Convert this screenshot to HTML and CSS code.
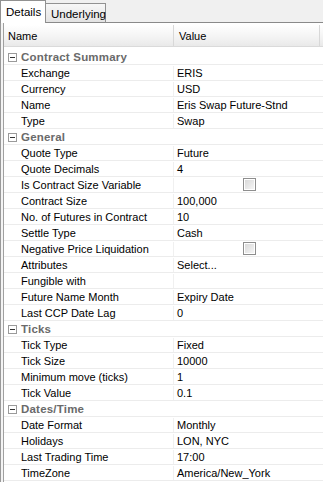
FILE: index.html
```html
<!DOCTYPE html>
<html lang="en">

<head>
    <meta charset="UTF-8" />
    <title>Contract Properties</title>
    <link rel="stylesheet" href="styles.css">
</head>

<body>
    <div class="tabs">
        <div class="tab active">Details</div>
        <div class="tab">Underlying</div>
        <div class="tab-fill"></div>
    </div>

    <div class="panel">
        <div class="grid">
            <div class="head">
                <div class="head-cell">Name</div>
                <div class="head-cell">Value</div>
            </div>
            <div class="head-gap"></div>
            <div id="rows"></div>
        </div>
    </div>

    <script>
        // property groups, [label, value]; value true/false = checkbox
        const groups = [
            ["Contract Summary", [
                ["Exchange", "ERIS"],
                ["Currency", "USD"],
                ["Name", "Eris Swap Future-Stnd"],
                ["Type", "Swap"]
            ]],
            ["General", [
                ["Quote Type", "Future"],
                ["Quote Decimals", "4"],
                ["Is Contract Size Variable", false],
                ["Contract Size", "100,000"],
                ["No. of Futures in Contract", "10"],
                ["Settle Type", "Cash"],
                ["Negative Price Liquidation", false],
                ["Attributes", "Select..."],
                ["Fungible with", ""],
                ["Future Name Month", "Expiry Date"],
                ["Last CCP Date Lag", "0"]
            ]],
            ["Ticks", [
                ["Tick Type", "Fixed"],
                ["Tick Size", "10000"],
                ["Minimum move (ticks)", "1"],
                ["Tick Value", "0.1"]
            ]],
            ["Dates/Time", [
                ["Date Format", "Monthly"],
                ["Holidays", "LON, NYC"],
                ["Last Trading Time", "17:00"],
                ["TimeZone", "America/New_York"]
            ]]
        ];

        const rows = document.getElementById("rows");

        groups.forEach(([title, props]) => {
            const g = document.createElement("div");
            g.className = "row group";
            g.innerHTML = `<span class="toggle"></span><span>${title}</span>`;
            rows.appendChild(g);

            props.forEach(([label, value]) => {
                const r = document.createElement("div");
                r.className = "row prop";
                const val = typeof value === "boolean"
                    ? `<div class="cell value check-cell"><span class="check"></span></div>`
                    : `<div class="cell value">${value}</div>`;
                r.innerHTML = `<div class="cell label">${label}</div>${val}`;
                rows.appendChild(r);
            });
        });
    </script>
</body>

</html>
```

FILE: styles.css
```css
body {
    margin: 0;
    font-family: 'Liberation Sans', Arial, sans-serif;
    font-size: 11px;
    color: #000;
    background-color: #fff;
    overflow: hidden;
}

/* tab strip */
.tabs {
    display: flex;
    height: 23px;
    background-color: #f0f0f0;
}

.tab {
    box-sizing: border-box;
    border: 1px solid #919191;
    padding: 0 5px;
}

.tab.active {
    width: 46px;
    height: 23px;
    background-color: #fff;
    border-bottom: none;
    padding-top: 5px;
    padding-left: 5px;
    font-size: 11.5px;
}

.tab:not(.active) {
    width: 60px;
    height: 20px;
    margin-top: 3px;
    border-left: none;
    padding-top: 4px;
    font-size: 11.5px;
    background: linear-gradient(#f7f7f7, #e3e3e3);
    border-bottom-color: #8a8a8a;
}

.tab-fill {
    flex: 1;
    border-bottom: 1px solid #8a8a8a;
}

/* property grid */
.panel {
    border-left: 1px solid #9a9a9a;
    padding-left: 2px;
    background-color: #f4f4f4;
}

.grid {
    border-left: 1px solid #a0a0a0;
    background-color: #fff;
    padding-top: 2px;
    height: 460px;
}

.head {
    display: grid;
    grid-template-columns: 170px 146px;
    height: 22px;
    background: linear-gradient(#ffffff, #f3f3f3 60%, #e9e9e9);
    border-bottom: 1px solid #dadada;
    box-sizing: border-box;
}

.head-cell {
    padding: 5px 4px 0;
    border-right: 1px solid #d8d8d8;
}

.head-cell + .head-cell {
    padding-left: 5px;
}

.head-gap {
    height: 2px;
}

.row {
    height: 16px;
    box-sizing: border-box;
    border-bottom: 1px solid #ececec;
    line-height: 14px;
    padding-top: 1px;
}

.prop {
    display: grid;
    grid-template-columns: 170px 1fr;
}

.cell {
    white-space: nowrap;
    overflow: hidden;
}

.label {
    padding-left: 17px;
    border-right: 1px solid #f0f0f0;
}

.value {
    padding-left: 3px;
}

.check-cell {
    display: flex;
    justify-content: center;
    padding-left: 0;
}

.check {
    width: 13px;
    height: 13px;
    box-sizing: border-box;
    border: 1px solid #8e8e8e;
    box-shadow: inset 0 0 0 1px #fff;
    background: linear-gradient(135deg, #d6d6d6, #f8f8f8);
    margin-left: 2px;
}

.group {
    display: flex;
    align-items: center;
    gap: 4px;
    padding-left: 4px;
    font-size: 11.5px;
    letter-spacing: 0.2px;
    font-weight: bold;
    color: #6a6a6a;
}

.toggle {
    width: 9px;
    height: 9px;
    box-sizing: border-box;
    border: 1px solid #9a9a9a;
    background-color: #fff;
    position: relative;
}

.toggle::after {
    content: "";
    position: absolute;
    left: 1px;
    top: 3px;
    width: 5px;
    height: 1px;
    background-color: #333;
}
```
